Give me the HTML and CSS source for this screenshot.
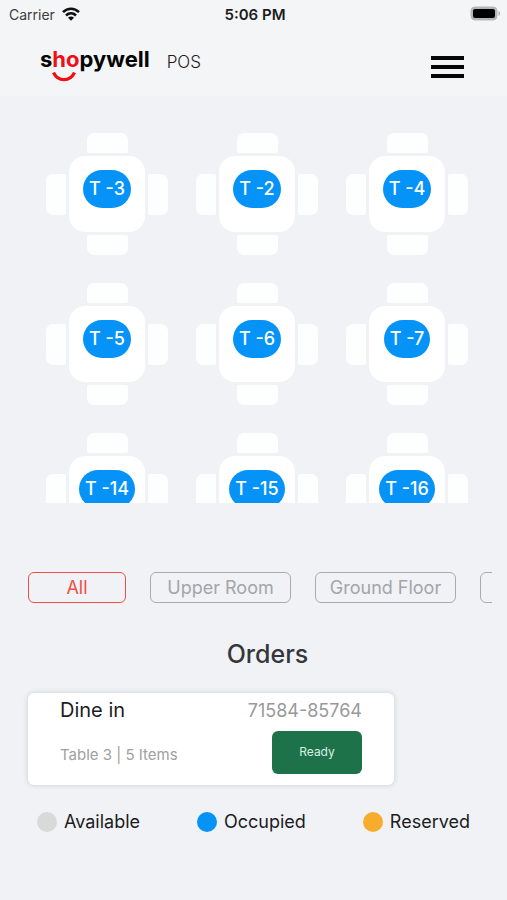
FILE: index.html
```html
<!DOCTYPE html>
<html lang="en">

<head>
    <meta charset="UTF-8">
    <meta name="viewport" content="width=device-width, initial-scale=1.0">
    <title>Shopywell POS</title>
    <link rel="stylesheet" href="styles.css">
</head>

<body>
    <div class="top">
        <div class="status-bar">
            <div class="carrier">
                <span>Carrier</span>
                <svg width="18" height="14" viewBox="0 0 18 14" fill="none" stroke="#111" stroke-width="2.6">
                    <path d="M1 5.2C5.6 0.6 12.4 0.6 17 5.2" />
                    <path d="M4 8.5C6.9 5.7 11.1 5.7 14 8.5" />
                    <path d="M9 13.8L6 10.8C7.7 9.2 10.3 9.2 12 10.8Z" fill="#111" stroke="none" />
                </svg>
            </div>
            <div class="clock">5:06 PM</div>
            <div class="battery">
                <svg width="32" height="16" viewBox="0 0 32 16">
                    <rect x="2" y="1" width="26" height="13" rx="4" fill="#b4b5b6" stroke="#b4b5b6" stroke-width="1" />
                    <rect x="4" y="3" width="22" height="9" rx="2" fill="#000" />
                    <path d="M29.500 5C31.800 5.800 31.800 9.200 29.500 10Z" fill="#b4b5b6" />
                </svg>
            </div>
        </div>
        <header class="header">
            <a href="#" class="logo">
                <span class="logo-text">s<span class="logo-red">ho</span>pywell</span>
                <svg class="smile" width="24" height="10" viewBox="0 0 24 10" fill="none">
                    <path d="M1.5 0.500C6 10 18 10 22.500 0.500" stroke="#ee1015" stroke-width="3.200" />
                </svg>
            </a>
            <span class="pos">POS</span>
            <button class="menu" type="button" aria-label="Menu">
                <svg width="33" height="24" viewBox="0 0 33 24" fill="#050708">
                    <rect x="0" y="1" width="33" height="4" />
                    <rect x="0" y="10" width="33" height="4" />
                    <rect x="0" y="19" width="33" height="4" />
                </svg>
            </button>
        </header>
    </div>

    <main>
        <div class="tables">
            <div class="table">
                <i class="chair up"></i><i class="chair left"></i>
                <div class="desk"><span class="badge">T -3</span></div>
                <i class="chair right"></i><i class="chair down"></i>
            </div>
            <div class="table">
                <i class="chair up"></i><i class="chair left"></i>
                <div class="desk"><span class="badge">T -2</span></div>
                <i class="chair right"></i><i class="chair down"></i>
            </div>
            <div class="table">
                <i class="chair up"></i><i class="chair left"></i>
                <div class="desk"><span class="badge">T -4</span></div>
                <i class="chair right"></i><i class="chair down"></i>
            </div>
            <div class="table">
                <i class="chair up"></i><i class="chair left"></i>
                <div class="desk"><span class="badge">T -5</span></div>
                <i class="chair right"></i><i class="chair down"></i>
            </div>
            <div class="table">
                <i class="chair up"></i><i class="chair left"></i>
                <div class="desk"><span class="badge">T -6</span></div>
                <i class="chair right"></i><i class="chair down"></i>
            </div>
            <div class="table">
                <i class="chair up"></i><i class="chair left"></i>
                <div class="desk"><span class="badge">T -7</span></div>
                <i class="chair right"></i><i class="chair down"></i>
            </div>
            <div class="table">
                <i class="chair up"></i><i class="chair left"></i>
                <div class="desk"><span class="badge">T -14</span></div>
                <i class="chair right"></i><i class="chair down"></i>
            </div>
            <div class="table">
                <i class="chair up"></i><i class="chair left"></i>
                <div class="desk"><span class="badge">T -15</span></div>
                <i class="chair right"></i><i class="chair down"></i>
            </div>
            <div class="table">
                <i class="chair up"></i><i class="chair left"></i>
                <div class="desk"><span class="badge">T -16</span></div>
                <i class="chair right"></i><i class="chair down"></i>
            </div>
        </div>

        <div class="rooms">
            <button type="button" class="room active">All</button>
            <button type="button" class="room">Upper Room</button>
            <button type="button" class="room">Ground Floor</button>
            <button type="button" class="room" aria-label="More rooms"></button>
        </div>

        <h2>Orders</h2>

        <div class="order">
            <div class="order-row">
                <span class="order-type">Dine in</span>
                <span class="order-number">71584-85764</span>
            </div>
            <div class="order-row">
                <span class="order-info">Table 3 | 5 Items</span>
                <button type="button" class="ready">Ready</button>
            </div>
        </div>

        <div class="legend">
            <span class="legend-item"><i class="dot available"></i>Available</span>
            <span class="legend-item"><i class="dot occupied"></i>Occupied</span>
            <span class="legend-item"><i class="dot reserved"></i>Reserved</span>
        </div>
    </main>
</body>

</html>
```

FILE: styles.css
```css
* {
    box-sizing: border-box;
}

body {
    margin: 0;
    font-family: Inter, "Liberation Sans", sans-serif;
    background: #f0f2f6;
    color: #1b1c1e;
}

button {
    font-family: inherit;
    cursor: pointer;
}

svg {
    display: block;
}

.top {
    background: #f3f5f6;
}

.status-bar {
    display: grid;
    grid-template-columns: 1fr auto 1fr;
    align-items: center;
    height: 28px;
    padding: 0 6px 0 9px;
    font-size: 14px;
}

.carrier {
    display: flex;
    align-items: center;
    gap: 7px;
    color: #3a3c3e;
}

.clock {
    font-size: 15px;
    font-weight: 600;
}

.battery {
    justify-self: end;
}

.header {
    display: flex;
    align-items: center;
    height: 68px;
    padding: 0 43px 0 40px;
}

.logo {
    padding-top: 4px;
    color: #050505;
    text-decoration: none;
}

.logo-text {
    display: block;
    font-size: 22px;
    font-weight: 700;
    line-height: 26px;
}

.logo-red {
    color: #ee1015;
}

.smile {
    margin-left: 12px;
}

.pos {
    margin-left: 17px;
    font-size: 17px;
    font-weight: 300;
}

.menu {
    margin-left: auto;
    margin-top: 10px;
    padding: 0;
    border: 0;
    background: none;
}

.tables {
    display: grid;
    grid-template-columns: repeat(3, 1fr);
    grid-auto-rows: 122px;
    gap: 28px 0;
    justify-items: center;
    height: 407px;
    padding: 37px 25px 0 32px;
    overflow: hidden;
}

.table {
    display: grid;
    grid-template: "a up b" 20px "left desk right" 76px "c down d" 20px / 20px 76px 20px;
    gap: 3px;
    place-items: center;
}

.chair {
    width: 41px;
    height: 20px;
    background: #fdfefe;
}

.up {
    grid-area: up;
    border-radius: 7px 7px 2px 2px;
}

.down {
    grid-area: down;
    border-radius: 2px 2px 7px 7px;
}

.left,
.right {
    width: 20px;
    height: 41px;
}

.left {
    grid-area: left;
    border-radius: 7px 2px 2px 7px;
}

.right {
    grid-area: right;
    border-radius: 2px 7px 7px 2px;
}

.desk {
    grid-area: desk;
    display: flex;
    justify-content: center;
    align-items: flex-start;
    width: 76px;
    height: 76px;
    padding-top: 14px;
    border-radius: 16px;
    background: #fff;
}

.badge {
    padding: 0 6px;
    border-radius: 19px;
    background: #0593f8;
    color: #fff;
    font-size: 18px;
    font-weight: 500;
    line-height: 38px;
    white-space: nowrap;
}

.rooms {
    display: flex;
    gap: 24px;
    margin: 69px 15px 0 28px;
    overflow: hidden;
}

.room {
    flex: none;
    width: 141px;
    height: 31px;
    padding: 0;
    border: 1px solid #a9abae;
    border-radius: 6px;
    background: none;
    color: #a3a5a9;
    font-size: 18px;
}

.room.active {
    width: 98px;
    border-color: #ee4f48;
    color: #ee4f48;
}

h2 {
    margin: 33px 0 21px 28px;
    font-size: 25px;
    font-weight: 500;
    line-height: 36px;
    text-align: center;
    color: #35373b;
}

.order {
    max-width: 366px;
    margin-left: 28px;
    padding: 5px 32px 11px;
    border-radius: 6px;
    background: #fff;
    box-shadow: 0 0 4px 1px #d5d7db;
}

.order-row {
    display: flex;
    justify-content: space-between;
    align-items: center;
}

.order-type {
    font-size: 20px;
    line-height: 24px;
}

.order-number {
    font-size: 18px;
    color: #999;
}

.order-row + .order-row {
    margin-top: 9px;
}

.order-info {
    padding-top: 4px;
    font-size: 15px;
    color: #a0a0a0;
}

.ready {
    width: 90px;
    height: 43px;
    padding: 0 0 2px;
    border: 0;
    border-radius: 6px;
    background: #1d7249;
    color: #d9f0e3;
    font-size: 12px;
}

.legend {
    display: flex;
    justify-content: space-between;
    padding: 24px 37px 0;
}

.legend-item {
    display: flex;
    align-items: center;
    gap: 7px;
    font-size: 18px;
    line-height: 26px;
}

.dot {
    width: 20px;
    height: 20px;
    border-radius: 50%;
}

.available {
    background: #d8d9d9;
}

.occupied {
    background: #0593f8;
}

.reserved {
    background: #f7ac2d;
}
```
